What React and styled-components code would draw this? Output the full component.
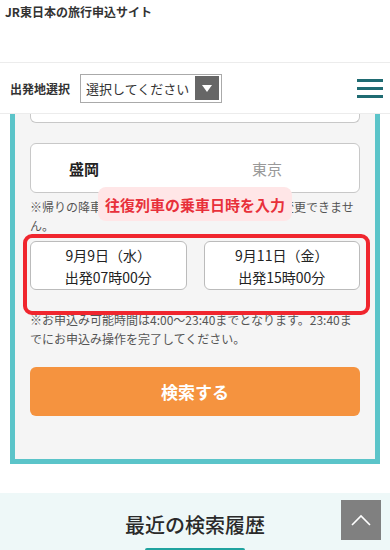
import React from 'react'
import styled, { createGlobalStyle } from 'styled-components'

const GlobalStyle = createGlobalStyle`
  body {
    margin: 0;
    background: #fff;
    font-family: "Noto Sans CJK JP", "Noto Sans", sans-serif;
    color: #333;
  }
`

const Header = styled.header`
  height: 63px;
  border-bottom: 1px solid #ececec;
  padding: 3px 0 0 5px;
  box-sizing: border-box;
`

const SiteName = styled.div`
  font-size: 12px;
  font-weight: 700;
  line-height: 18px;
  color: #333;
`

const Toolbar = styled.div`
  height: 50px;
  display: flex;
  align-items: center;
  padding: 0 7px 0 10px;
  border-bottom: 1px solid #ececec;
`

const Label = styled.span`
  font-size: 12px;
  font-weight: 700;
  color: #333;
  margin-right: 10px;
`

const Select = styled.div`
  width: 142px;
  height: 29px;
  box-sizing: border-box;
  border: 1px solid #aaa;
  display: flex;
  align-items: center;
  justify-content: space-between;
  padding: 0 2px 0 5px;
  font-size: 13px;
  color: #333;
`

const Arrow = styled.div`
  width: 24px;
  height: 24px;
  background: #666;
  display: flex;
  align-items: center;
  justify-content: center;
  &::after {
    content: '';
    border-left: 5px solid transparent;
    border-right: 5px solid transparent;
    border-top: 7px solid #fff;
  }
`

const Burger = styled.div`
  margin-left: auto;
  width: 26px;
  display: flex;
  flex-direction: column;
  gap: 5px;
  span {
    display: block;
    height: 3px;
    background: #1f6b72;
  }
`

const Card = styled.section`
  margin: 0 10px;
  border: 5px solid #5bc4c9;
  border-top: none;
  background: #f5f5f5;
  padding: 0 15px 43px;
`

const ClippedBox = styled.div`
  height: 8px;
  border: 1px solid #c8c8c8;
  border-top: none;
  border-radius: 0 0 6px 6px;
  background: #fff;
`

const StationBox = styled.div`
  margin-top: 20px;
  height: 50px;
  box-sizing: border-box;
  border: 1px solid #c8c8c8;
  border-radius: 6px;
  background: #fff;
  display: flex;
  align-items: center;
  justify-content: space-between;
  padding: 0 77px 0 38px;
`

const Station = styled.span`
  font-size: 15px;
  font-weight: ${p => (p.$muted ? 400 : 700)};
  color: ${p => (p.$muted ? '#999' : '#222')};
`

const NoteWrap = styled.div`
  position: relative;
`

const Note = styled.p`
  margin: ${p => p.$top || '4px'} 0 0;
  font-size: 12px;
  line-height: 19px;
  color: #555;
`

const Tooltip = styled.div`
  position: absolute;
  left: 68px;
  top: -10px;
  width: 194px;
  height: 34px;
  border-radius: 8px;
  background: #ffe6e7;
  color: #e8303a;
  font-size: 15px;
  font-weight: 700;
  display: flex;
  align-items: center;
  justify-content: center;
`

const DateRow = styled.div`
  position: relative;
  margin-top: 6px;
  display: flex;
  gap: 17px;
`

const DateButton = styled.div`
  flex: 1;
  height: 49px;
  box-sizing: border-box;
  border: 1px solid #bbb;
  border-radius: 6px;
  background: #fff;
  display: flex;
  flex-direction: column;
  align-items: center;
  justify-content: center;
  font-size: 14px;
  line-height: 22px;
  color: #222;
`

const Highlight = styled.div`
  position: absolute;
  top: -7px;
  left: -7px;
  right: -10px;
  bottom: -25px;
  border: 4px solid #f0262e;
  border-radius: 9px;
  pointer-events: none;
  z-index: 1;
`

const SearchButton = styled.button`
  margin-top: 19px;
  width: 100%;
  height: 49px;
  border: none;
  border-radius: 6px;
  background: #f5933f;
  color: #fff;
  font-family: inherit;
  font-size: 17px;
  font-weight: 700;
`

const History = styled.section`
  margin-top: 29px;
  background: #eef8f8;
  padding-top: 18px;
  display: flex;
  flex-direction: column;
  align-items: center;
`

const HistoryTitle = styled.h2`
  margin: 0;
  font-size: 20px;
  font-weight: 500;
  line-height: 28px;
  color: #2a2a2a;
`

const Underline = styled.div`
  margin-top: 9px;
  width: 100px;
  height: 4px;
  border-radius: 2px;
  background: #1fa39f;
`

const TopButton = styled.div`
  position: fixed;
  right: 9px;
  bottom: 10px;
  width: 40px;
  height: 40px;
  background: #808080;
  display: flex;
  align-items: center;
  justify-content: center;
`

const App = () => {
  return (
    <>
      <GlobalStyle />
      <Header>
        <SiteName>JR東日本の旅行申込サイト</SiteName>
      </Header>
      <Toolbar>
        <Label>出発地選択</Label>
        <Select>
          選択してください
          <Arrow />
        </Select>
        <Burger>
          <span />
          <span />
          <span />
        </Burger>
      </Toolbar>
      <Card>
        <ClippedBox />
        <StationBox>
          <Station>盛岡</Station>
          <Station $muted>東京</Station>
        </StationBox>
        <NoteWrap>
          <Note>※帰りの降車駅は、行きの乗車駅と異なる駅に変更できません。</Note>
          <Tooltip>往復列車の乗車日時を入力</Tooltip>
        </NoteWrap>
        <DateRow>
          <DateButton>
            <span>9月9日（水）</span>
            <span>出発07時00分</span>
          </DateButton>
          <DateButton>
            <span>9月11日（金）</span>
            <span>出発15時00分</span>
          </DateButton>
          <Highlight />
        </DateRow>
        <Note $top="20px">※お申込み可能時間は4:00～23:40までとなります。23:40までにお申込み操作を完了してください。</Note>
        <SearchButton>検索する</SearchButton>
      </Card>
      <History>
        <HistoryTitle>最近の検索履歴</HistoryTitle>
        <Underline />
      </History>
      <TopButton>
        <svg width="22" height="14" viewBox="0 0 22 14">
          <path d="M2 12 L11 3 L20 12" fill="none" stroke="#fff" strokeWidth="1.6" />
        </svg>
      </TopButton>
    </>
  )
}

export default App
